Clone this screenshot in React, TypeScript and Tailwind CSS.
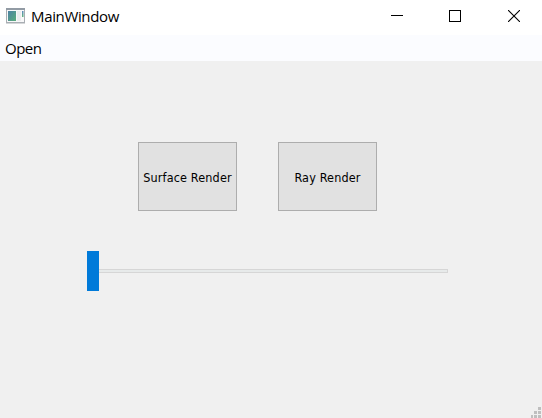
import type { ReactNode } from "react";

function AppIcon() {
  return (
    <svg width="20" height="17" viewBox="0 0 20 17" className="block">
      <defs>
        <linearGradient id="pane" x1="0" y1="0" x2="1" y2="1">
          <stop offset="0" stopColor="#4d82a4" />
          <stop offset="1" stopColor="#5aad7c" />
        </linearGradient>
        <linearGradient id="bar" x1="0" y1="0" x2="0" y2="1">
          <stop offset="0" stopColor="#5b88c0" />
          <stop offset="1" stopColor="#63b57c" />
        </linearGradient>
      </defs>
      <rect x="0.5" y="0.5" width="18" height="14" fill="#f8f8f9" stroke="#a9aeb3" />
      <path d="M0 1h19" stroke="#929ba4" strokeWidth="2" />
      <path d="M0 15.5h19" stroke="#d5d7d9" />
      <rect x="2" y="3" width="8" height="10" fill="url(#pane)" />
      <rect x="11" y="3" width="4" height="10" fill="#ececee" />
      <rect x="16" y="3" width="1.5" height="6" fill="url(#bar)" />
    </svg>
  );
}

function TitleBar() {
  return (
    <header className="flex h-[35px] items-start bg-white">
      <div className="pt-2 pl-1.5">
        <AppIcon />
      </div>
      <h1 className="ml-[5px] text-[15px] leading-[33px] font-normal tracking-[-0.35px] whitespace-nowrap">MainWindow</h1>
      <div className="ml-auto flex pt-[10px] pr-[22px]">
        <svg width="12" height="12" className="mr-[46px]" shapeRendering="crispEdges">
          <path d="M0 5.5h12" stroke="#000" />
        </svg>
        <svg width="12" height="12" className="mr-[47px]" shapeRendering="crispEdges">
          <path d="M.5.5h11v11H.5z" fill="none" stroke="#000" />
        </svg>
        <svg width="12" height="12">
          <path d="M0 0l12 12M12 0L0 12" stroke="#000" strokeWidth="1.1" />
        </svg>
      </div>
    </header>
  );
}

function PushButton({ children }: { children: ReactNode }) {
  return (
    <button className="flex h-[69px] w-[99px] items-center justify-center border border-[#adadad] bg-[#e1e1e1] pt-[3px] font-['DejaVu_Sans_Condensed','DejaVu_Sans',sans-serif] text-[12.5px] tracking-[0.15px] whitespace-nowrap">
      {children}
    </button>
  );
}

export default function App() {
  return (
    <main className="flex h-[418px] w-[542px] flex-col overflow-hidden bg-[#f0f0f0] font-['Open_Sans',sans-serif] text-black">
      <TitleBar />
      <nav className="h-[26px] bg-[#fbfcff] pl-[5px] text-[15px] leading-[26px] tracking-[-0.5px]">Open</nav>
      <div className="flex gap-[41px] pt-[81px] pl-[138px]">
        <PushButton>Surface Render</PushButton>
        <PushButton>Ray Render</PushButton>
      </div>
      <div className="mt-10 ml-[87px] flex h-10 items-center">
        <div className="h-10 w-3 bg-[#007ad9]" />
        <div className="h-1 w-[349px] border border-l-0 border-[#d6d6d6] bg-[#e7eaea]" />
      </div>
      <svg width="11" height="11" className="mt-auto ml-auto block" shapeRendering="crispEdges" fill="#bfbfbf">
        <path d="M7 0h3v3H7zM3 4h3v3H3zM7 4h3v3H7zM0 8h2v3H0zM3 8h3v3H3zM7 8h3v3H7z" />
      </svg>
    </main>
  );
}
